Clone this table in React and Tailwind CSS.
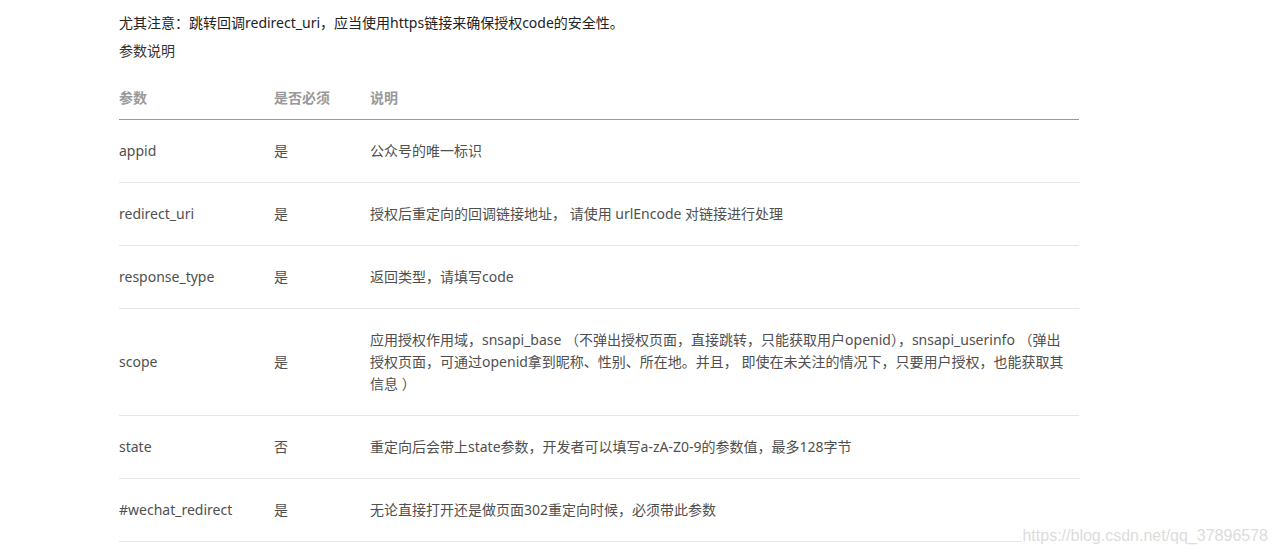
import React from 'react';

const rows = [
  { name: 'appid', req: '是', desc: '公众号的唯一标识' },
  { name: 'redirect_uri', req: '是', desc: '授权后重定向的回调链接地址， 请使用 urlEncode 对链接进行处理' },
  { name: 'response_type', req: '是', desc: '返回类型，请填写code' },
  {
    name: 'scope',
    req: '是',
    desc: '应用授权作用域，snsapi_base （不弹出授权页面，直接跳转，只能获取用户openid），snsapi_userinfo （弹出授权页面，可通过openid拿到昵称、性别、所在地。并且， 即使在未关注的情况下，只要用户授权，也能获取其信息 ）',
  },
  { name: 'state', req: '否', desc: '重定向后会带上state参数，开发者可以填写a-zA-Z0-9的参数值，最多128字节' },
  { name: '#wechat_redirect', req: '是', desc: '无论直接打开还是做页面302重定向时候，必须带此参数' },
];

export default function App() {
  return (
    <div
      className="relative w-[1276px] h-[553px] bg-white overflow-hidden text-[14px] leading-[22px] text-[#4f4f4f]"
      style={{ fontFamily: '"Noto Sans", "Noto Sans CJK SC", sans-serif' }}
    >
      <div className="ml-[119px] w-[960px] pt-[12px]">
        <p className="text-[#222]">尤其注意：跳转回调redirect_uri，应当使用https链接来确保授权code的安全性。</p>
        <p className="mt-[6px] text-[#333]">参数说明</p>

        <table className="mt-[15px] w-full border-collapse table-fixed">
          <colgroup>
            <col className="w-[155px]" />
            <col className="w-[96px]" />
            <col />
          </colgroup>
          <thead>
            <tr className="border-b border-[#999]">
              <th className="text-left font-bold text-[#999] pt-[10px] pb-[10px]">参数</th>
              <th className="text-left font-bold text-[#999] pt-[10px] pb-[10px]">是否必须</th>
              <th className="text-left font-bold text-[#999] pt-[10px] pb-[10px]">说明</th>
            </tr>
          </thead>
          <tbody>
            {rows.map((r) => (
              <tr key={r.name} className="border-b border-[#e6e6e6]">
                <td className="py-[20px] align-middle">{r.name}</td>
                <td className="py-[20px] align-middle">{r.req}</td>
                <td className="py-[20px] pr-[8px] align-middle">{r.desc}</td>
              </tr>
            ))}
          </tbody>
        </table>
      </div>

      <span
        className="absolute top-[527px] right-[8px] bg-white text-[16px] leading-[18px] text-[#dcdcdc]"
        style={{ fontFamily: '"Liberation Sans", Arial, sans-serif' }}
      >
        https://blog.csdn.net/qq_37896578
      </span>
    </div>
  );
}
